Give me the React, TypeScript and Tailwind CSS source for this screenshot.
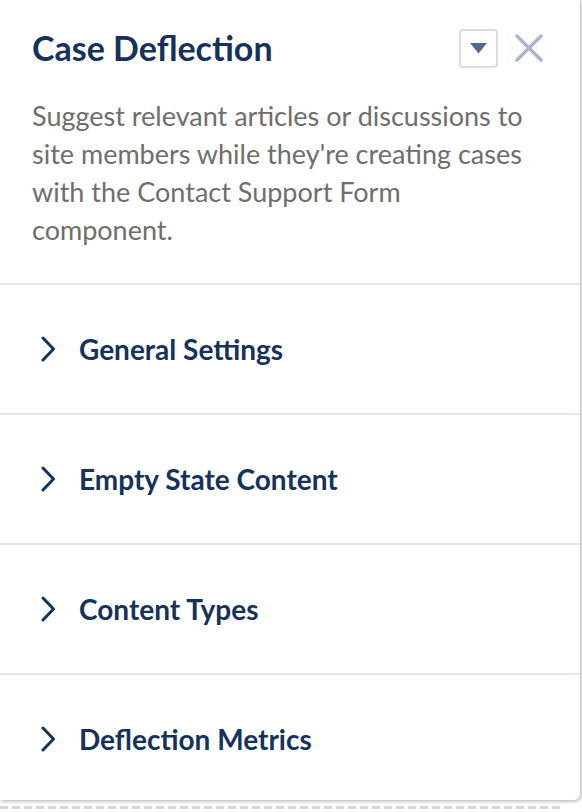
const sections = ['General Settings', 'Empty State Content', 'Content Types', 'Deflection Metrics'];

export default function App() {
  return (
    <div className="h-[812px] w-[582px] overflow-hidden bg-white" style={{ fontFamily: 'Lato, "Open Sans", sans-serif' }}>
      <div className="relative h-[800px] w-[580px] overflow-hidden rounded-br-md bg-white shadow-[1px_1px_4px_rgba(0,0,0,0.35)]">
        <div className="h-[283px] px-8 pt-[26px]">
          <div className="flex items-center justify-between">
            <h1 className="text-[34px] font-bold leading-[44px] text-[#16325c]">Case Deflection</h1>
            <div className="mr-[5px] flex items-center gap-[17px]">
              <button className="flex h-[39px] w-[39px] items-center justify-center rounded-[4px] border-2 border-[#d8dde6] bg-white">
                <svg width="17" height="12" viewBox="0 0 17 12">
                  <path d="M0 1 H17 L8.5 11.5 Z" fill="#54698d" />
                </svg>
              </button>
              <svg width="28" height="28" viewBox="0 0 28 28">
                <path d="M2 2 L26 26 M26 2 L2 26" stroke="#a8b7c7" strokeWidth="3.5" strokeLinecap="round" />
              </svg>
            </div>
          </div>
          <p className="mt-[27px] w-[506px] text-[27px] leading-[38px] text-[#706e6b]">
            Suggest relevant articles or discussions to site members while they're creating cases with the Contact Support Form component.
          </p>
        </div>
        {sections.map((s) => (
          <div key={s} className="flex h-[130px] items-center border-t-2 border-[#e3e6ee] pl-[40px]">
            <svg width="16" height="26" viewBox="0 0 16 26">
              <path d="M3 2 L13.5 13 L3 24" fill="none" stroke="#16325c" strokeWidth="3" strokeLinecap="round" strokeLinejoin="round" />
            </svg>
            <span className="ml-[23px] text-[28px] font-bold text-[#16325c]">{s}</span>
          </div>
        ))}
      </div>
      <div className="mt-[6px] h-[3px] w-[560px] bg-[repeating-linear-gradient(90deg,#d4d8de_0_8px,transparent_8px_12px)]" />
    </div>
  );
}
